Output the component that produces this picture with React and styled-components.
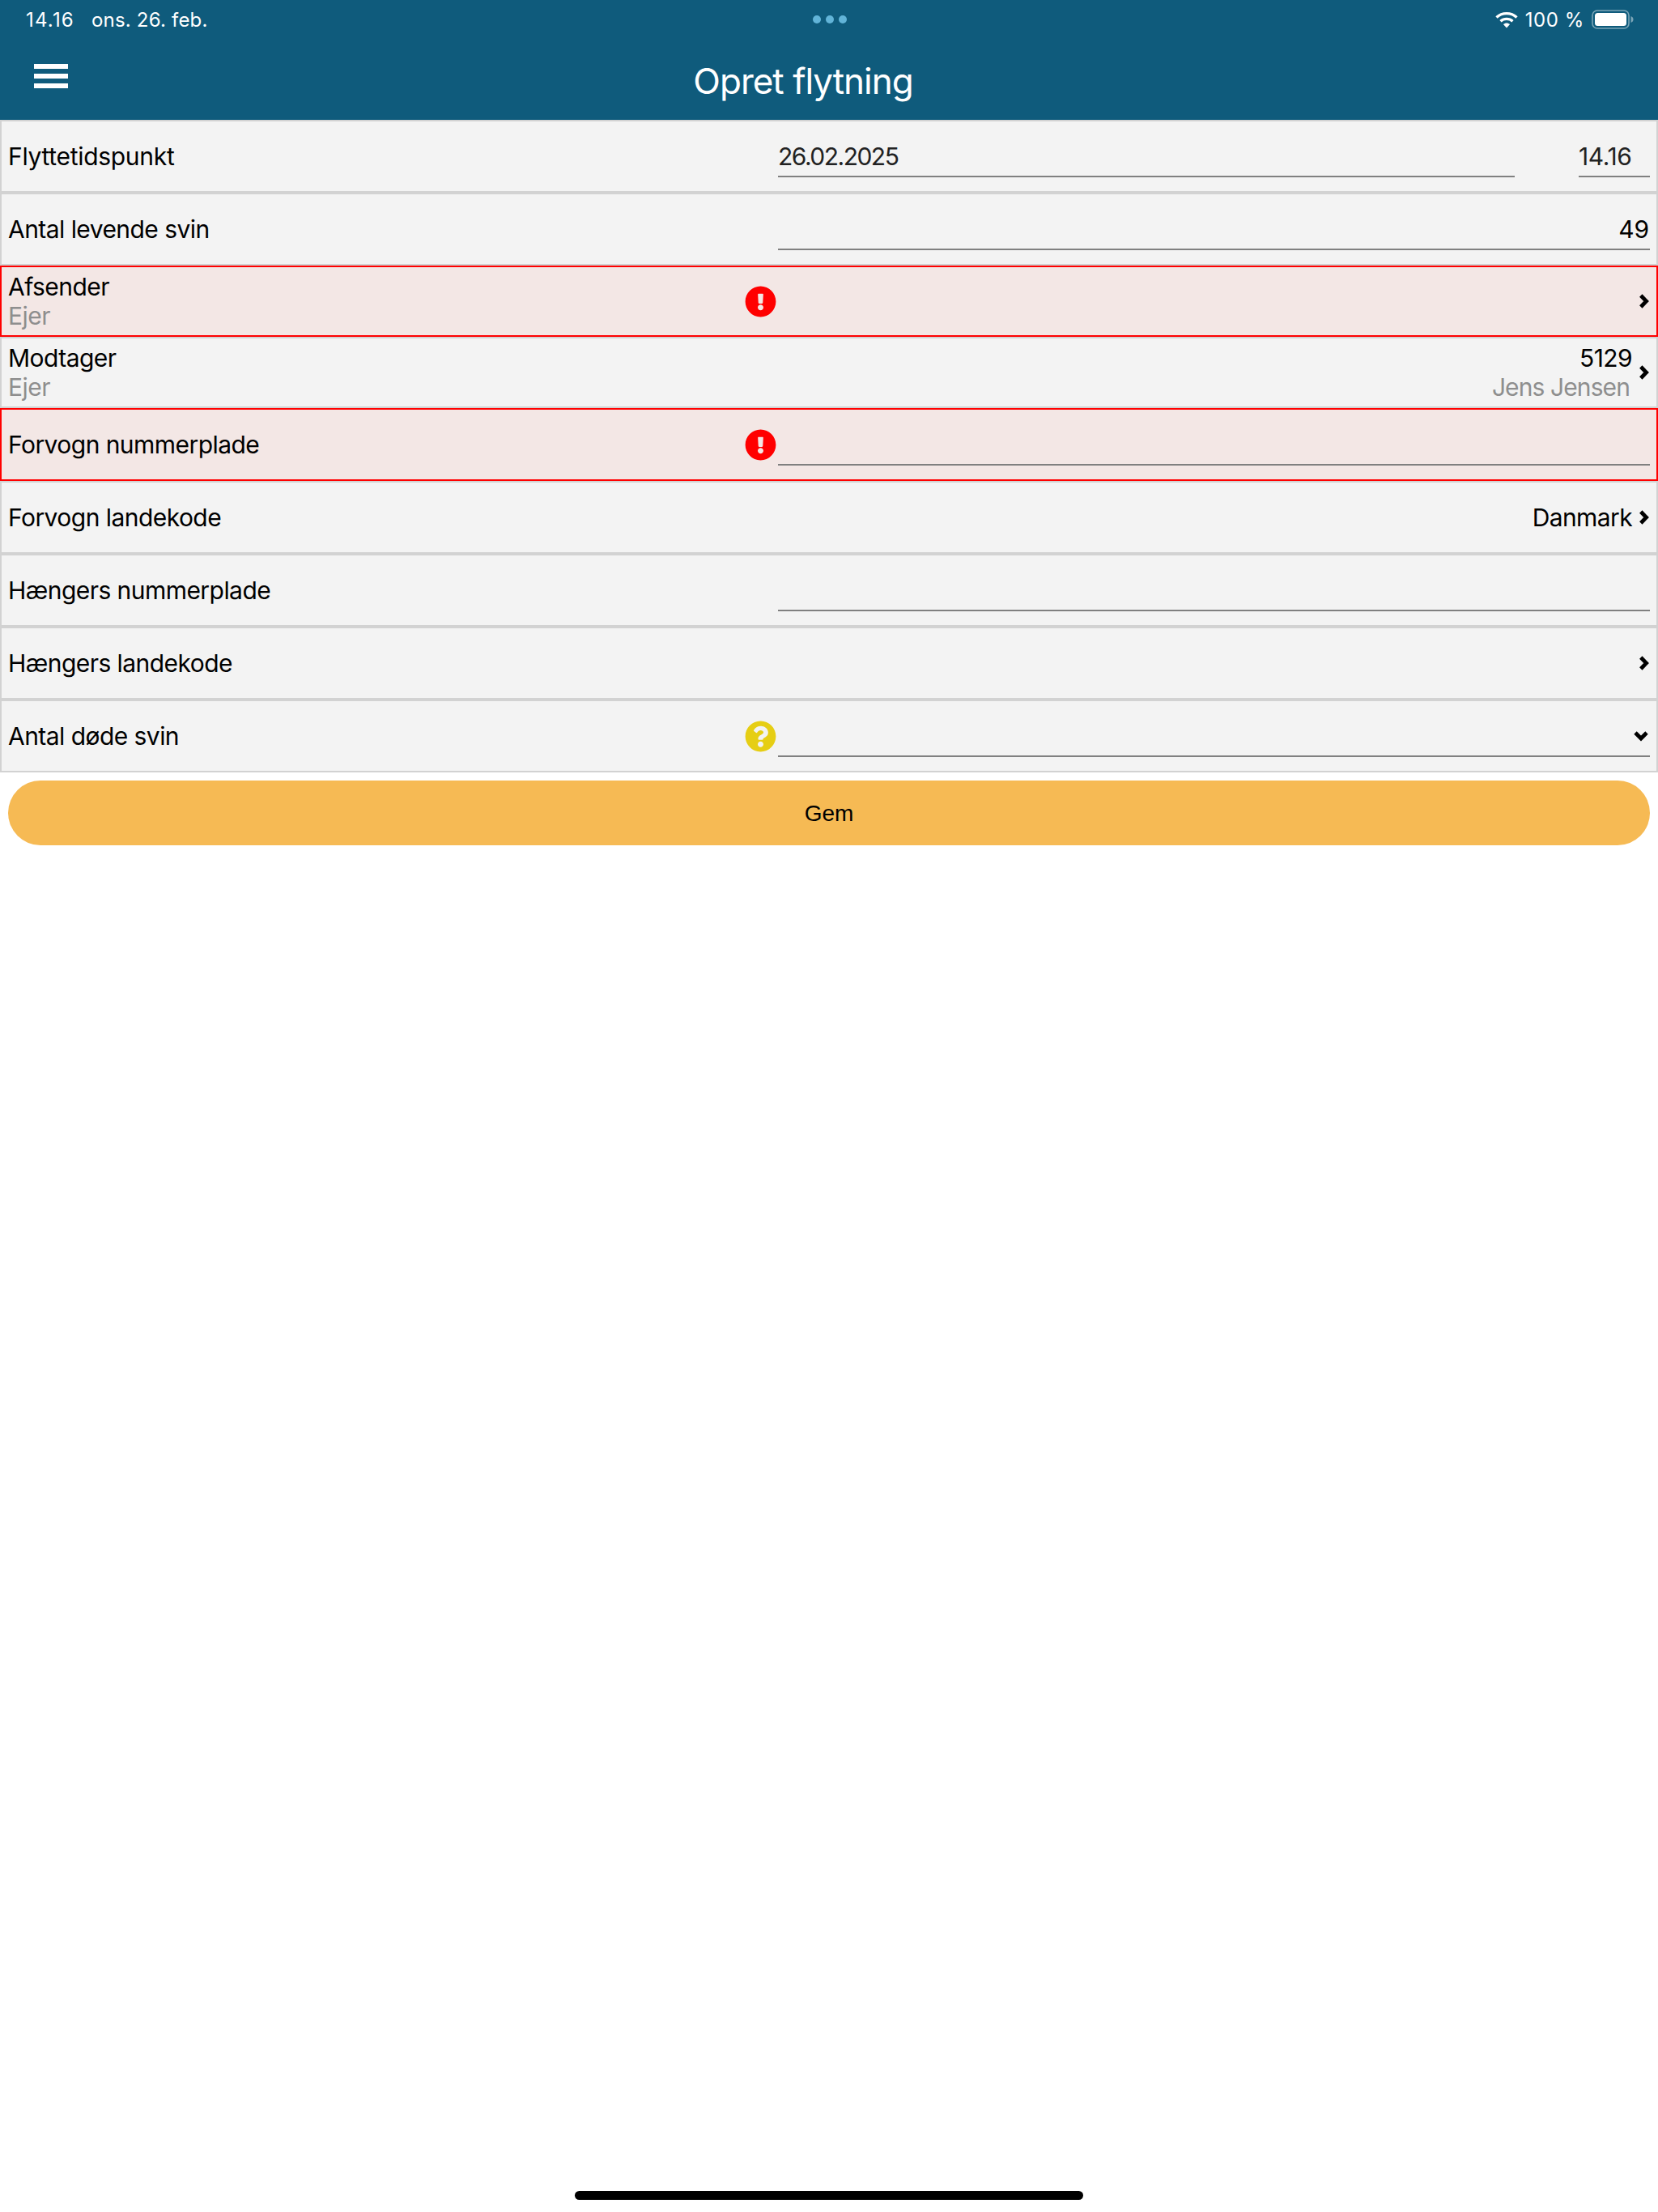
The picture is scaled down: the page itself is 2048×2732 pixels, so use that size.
import { FaExclamationCircle, FaQuestionCircle } from "react-icons/fa";
import styled, { createGlobalStyle } from "styled-components";

const GlobalStyle = createGlobalStyle`
  html, body {
    margin: 0;
    padding: 0;
    background: #fff;
  }
  body {
    font-family: Inter, "Liberation Sans", sans-serif;
    color: #000;
  }
`;

const Page = styled.div`
  display: flex;
  flex-direction: column;
  width: 2048px;
  height: 2732px;
  overflow: hidden;
`;

const Header = styled.header`
  display: flex;
  flex-direction: column;
  height: 148px;
  background-color: #0f5b7c;
  color: #fff;
`;

const StatusBar = styled.div`
  display: grid;
  grid-template-columns: 1fr auto 1fr;
  align-items: center;
  height: 48px;
  padding: 0 30px 0 32px;
  font-size: 24px;
  letter-spacing: 0.2px;
`;

const StatusLeft = styled.div`
  display: flex;
  gap: 21px;
`;

const StatusTime = styled.span`
  letter-spacing: 1.2px;
`;

const Dots = styled.div`
  display: flex;
  gap: 6px;
`;

const Dot = styled.span`
  width: 10px;
  height: 10px;
  border-radius: 50%;
  background-color: #62b4d8;
`;

const StatusRight = styled.div`
  display: flex;
  justify-content: flex-end;
  align-items: center;
  gap: 9px;
`;

const Battery = styled.span`
  letter-spacing: 0.6px;
`;

const Nav = styled.div`
  display: flex;
  align-items: flex-start;
  padding: 31px 148px 0 42px;
`;

const MenuIcon = styled.div`
  display: flex;
  flex-direction: column;
  gap: 6px;
  width: 42px;
`;

const MenuBar = styled.span`
  height: 6px;
  background-color: #fff;
`;

const Title = styled.h1`
  flex: 1;
  margin: -6px 0 0;
  text-align: center;
  font-size: 44px;
  line-height: 54px;
  font-weight: 400;
  letter-spacing: -1px;
`;

const Form = styled.div`
  display: flex;
  flex-direction: column;
`;

const Row = styled.div`
  display: grid;
  grid-template-columns: 1fr 39px 1077px;
  column-gap: 2px;
  align-items: center;
  box-sizing: border-box;
  height: ${(p) => (p.$tall ? 88 : 90)}px;
  padding: 0 8px;
  border: 2px solid ${(p) => (p.$error ? "#ff0000" : "#d2d2d2")};
  background-color: ${(p) => (p.$error ? "#f3e7e5" : "#f3f3f3")};
`;

const Label = styled.div`
  font-size: 30px;
  line-height: 36px;
  letter-spacing: ${(p) => p.$spacing || "-0.55px"};
`;

const Sub = styled.div`
  font-size: 30px;
  line-height: 36px;
  letter-spacing: -0.55px;
  color: #8e8e8e;
`;

const StateIcon = styled.div`
  display: flex;
  color: ${(p) => p.$color};
`;

const FieldGroup = styled.div`
  display: flex;
  justify-content: space-between;
`;

const Field = styled.div`
  display: flex;
  align-items: center;
  justify-content: ${(p) => (p.$right ? "flex-end" : "flex-start")};
  box-sizing: border-box;
  width: ${(p) => p.$width || "100%"};
  height: 50px;
  margin-top: 2px;
  padding-right: ${(p) => (p.$right ? 1 : 0)}px;
  border-bottom: 2px solid #808080;
  font-size: 30px;
  letter-spacing: ${(p) => p.$spacing || "-0.15px"};
  color: ${(p) => p.$color || "#000"};
`;

const Value = styled.div`
  display: flex;
  justify-content: flex-end;
  align-items: center;
  gap: 8px;
  padding-right: 1px;
`;

const ValueText = styled.div`
  text-align: right;
  font-size: 30px;
  line-height: 36px;
  letter-spacing: -0.6px;
`;

const SubValue = styled.div`
  padding-right: 3px;
  letter-spacing: -0.9px;
  color: #8e8e8e;
`;

const ChevronSvg = styled.svg`
  flex: none;
  display: block;
`;

const SaveButton = styled.button`
  display: block;
  width: 2028px;
  height: 80px;
  margin: 10px 10px 0;
  padding: 1px 0 0;
  border: none;
  border-radius: 40px;
  background-color: #f6ba54;
  font-family: "Liberation Sans", Arial, sans-serif;
  font-size: 28px;
  color: #000;
`;

const HomeBar = styled.div`
  align-self: center;
  width: 628px;
  height: 11px;
  margin-top: auto;
  margin-bottom: 15px;
  border-radius: 6px;
  background-color: #000;
`;

function WifiIcon() {
  return (
    <svg width="28" height="21" viewBox="0 0 28 21">
      <path d="M1.5 7.5 C8.5 1 19.5 1 26.5 7.5" fill="none" stroke="#fff" strokeWidth="3.4" />
      <path d="M6.5 12.2 C10.8 8.4 17.2 8.4 21.5 12.2" fill="none" stroke="#fff" strokeWidth="3.4" />
      <path d="M9.9 16 C12.4 13.9 15.6 13.9 18.1 16 L14 20.5 Z" fill="#fff" />
    </svg>
  );
}

function BatteryIcon() {
  return (
    <svg width="52" height="24" viewBox="0 0 52 24">
      <rect x="1" y="1" width="45" height="22" rx="6" fill="none" stroke="#fff" strokeOpacity="0.45" strokeWidth="1.6" />
      <rect x="4" y="4" width="39" height="16" rx="3.5" fill="#fff" />
      <path d="M48.5 8 C50.5 8.7 51.5 10 51.5 12 C51.5 14 50.5 15.3 48.5 16 Z" fill="#fff" fillOpacity="0.45" />
    </svg>
  );
}

function Chevron() {
  return (
    <ChevronSvg width="13" height="20" viewBox="0 0 13 20">
      <path d="M2.8 3 L9.6 10 L2.8 17" fill="none" stroke="#000" strokeWidth="4.8" />
    </ChevronSvg>
  );
}

function SelectChevron() {
  return (
    <ChevronSvg width="20" height="14" viewBox="0 0 20 14">
      <path d="M3 3 L10 10 L17 3" fill="none" stroke="#000" strokeWidth="4.8" />
    </ChevronSvg>
  );
}

function App() {
  return (
    <Page>
      <GlobalStyle />
      <Header>
        <StatusBar>
          <StatusLeft>
            <StatusTime>14.16</StatusTime>
            <span>ons. 26. feb.</span>
          </StatusLeft>
          <Dots>
            <Dot />
            <Dot />
            <Dot />
          </Dots>
          <StatusRight>
            <WifiIcon />
            <Battery>100 %</Battery>
            <BatteryIcon />
          </StatusRight>
        </StatusBar>
        <Nav>
          <MenuIcon>
            <MenuBar />
            <MenuBar />
            <MenuBar />
          </MenuIcon>
          <Title>Opret flytning</Title>
        </Nav>
      </Header>

      <Form>
        <Row>
          <Label $spacing="-0.3px">Flyttetidspunkt</Label>
          <span />
          <FieldGroup>
            <Field $width="910px" $color="#222" $spacing="-1.5px">26.02.2025</Field>
            <Field $width="88px" $color="#222" $spacing="-0.4px">14.16</Field>
          </FieldGroup>
        </Row>
        <Row>
          <Label>Antal levende svin</Label>
          <span />
          <Field $right>49</Field>
        </Row>
        <Row $tall $error>
          <div>
            <Label>Afsender</Label>
            <Sub>Ejer</Sub>
          </div>
          <StateIcon $color="#ff0000">
            <FaExclamationCircle size={39} />
          </StateIcon>
          <Value>
            <Chevron />
          </Value>
        </Row>
        <Row $tall>
          <div>
            <Label>Modtager</Label>
            <Sub>Ejer</Sub>
          </div>
          <span />
          <Value>
            <ValueText>
              5129
              <SubValue>Jens Jensen</SubValue>
            </ValueText>
            <Chevron />
          </Value>
        </Row>
        <Row $error>
          <Label>Forvogn nummerplade</Label>
          <StateIcon $color="#ff0000">
            <FaExclamationCircle size={39} />
          </StateIcon>
          <Field />
        </Row>
        <Row>
          <Label>Forvogn landekode</Label>
          <span />
          <Value>
            <ValueText>Danmark</ValueText>
            <Chevron />
          </Value>
        </Row>
        <Row>
          <Label>Hængers nummerplade</Label>
          <span />
          <Field />
        </Row>
        <Row>
          <Label>Hængers landekode</Label>
          <span />
          <Value>
            <Chevron />
          </Value>
        </Row>
        <Row>
          <Label>Antal døde svin</Label>
          <StateIcon $color="#e6ce14">
            <FaQuestionCircle size={39} />
          </StateIcon>
          <Field $right>
            <SelectChevron />
          </Field>
        </Row>
      </Form>

      <SaveButton>Gem</SaveButton>
      <HomeBar />
    </Page>
  );
}

export default App;
